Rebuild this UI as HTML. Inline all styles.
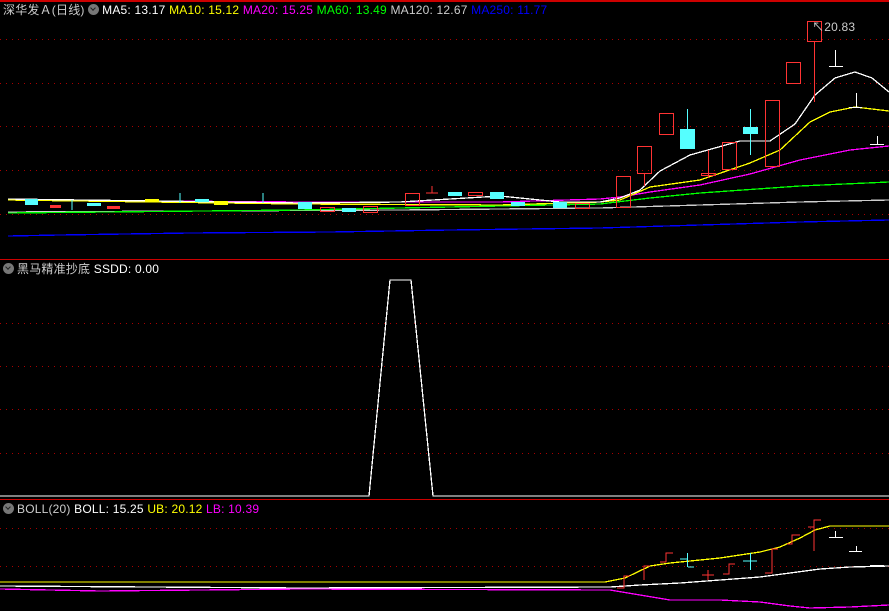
<!DOCTYPE html>
<html><head><meta charset="utf-8"><style>
html,body{margin:0;padding:0;background:#000;width:889px;height:611px;overflow:hidden}
.t{position:absolute;font-family:"Liberation Sans","Noto Sans CJK SC",sans-serif;font-size:12px;white-space:nowrap;line-height:14px;letter-spacing:0.2px}
.ic{display:inline-block;width:11px;height:11px;border-radius:50%;background:#777;vertical-align:-1px;position:relative;margin-right:3px}
.ic:after{content:"";position:absolute;left:3px;top:2px;width:3px;height:3px;border-right:1.5px solid #222;border-bottom:1.5px solid #222;transform:rotate(45deg)}
</style></head><body>
<svg width="889" height="611" style="position:absolute;left:0;top:0" shape-rendering="crispEdges">
<rect x="0" y="0" width="889" height="2" fill="#c00"/>
<g stroke="#a00" stroke-dasharray="1 5" stroke-width="1">
<line x1="0" y1="39.5" x2="889" y2="39.5"/><line x1="0" y1="83.5" x2="889" y2="83.5"/><line x1="0" y1="126.5" x2="889" y2="126.5"/><line x1="0" y1="170.5" x2="889" y2="170.5"/><line x1="0" y1="214.5" x2="889" y2="214.5"/>
<line x1="0" y1="323.5" x2="889" y2="323.5"/><line x1="0" y1="366.5" x2="889" y2="366.5"/><line x1="0" y1="409.5" x2="889" y2="409.5"/><line x1="0" y1="453.5" x2="889" y2="453.5"/>
<line x1="0" y1="528.5" x2="889" y2="528.5"/><line x1="0" y1="566.5" x2="889" y2="566.5"/>
</g>
<rect x="0" y="259" width="889" height="1" fill="#c00"/>
<rect x="0" y="499" width="889" height="1" fill="#c00"/>
<g fill="none" stroke-width="1.3">
<polyline stroke="#00f" points="8,236 60,235 190,233 330,232 450,230 600,228 700,225 800,222 889,220"/>
<polyline stroke="#ccc" points="8,212 200,211 400,210 600,208 700,205 800,202 889,200"/>
<polyline stroke="#0f0" points="8,213 300,210 500,206 600,204 650,198 700,193 800,186 889,182"/>
<polyline stroke="#f0f" points="8,200 300,202 500,202 600,199 620,197 650,192 700,185 750,174 800,160 850,150 889,146"/>
<polyline stroke="#ff0" points="8,200 300,204 500,205 600,202 620,200 650,187 700,180 750,163 780,150 810,122 830,112 855,107 889,111"/>
<polyline stroke="#fff" points="8,199 300,203 400,202 500,196 560,202 600,202 620,198 640,190 660,171 690,155 740,141 770,141 795,124 815,95 835,78 855,72 872,78 889,92"/>
</g>
<g>
<rect x="25" y="199" width="13" height="6" fill="#5ff"/>
<rect x="50" y="205" width="11" height="3" fill="#f33"/>
<line x1="72" y1="200" x2="72" y2="210" stroke="#5ff"/>
<rect x="87" y="203" width="14" height="3" fill="#5ff"/>
<rect x="107" y="206" width="13" height="3" fill="#f33"/>
<rect x="145" y="199" width="14" height="3" fill="#ff0"/>
<line x1="180" y1="193" x2="180" y2="203" stroke="#5ff"/>
<rect x="195" y="199" width="14" height="3" fill="#5ff"/>
<rect x="214" y="201" width="14" height="4" fill="#ff0"/>
<line x1="263" y1="193" x2="263" y2="203" stroke="#5ff"/>
<rect x="298" y="202" width="14" height="7" fill="#5ff"/>
<rect x="320.5" y="207.5" width="14" height="4" fill="none" stroke="#f33"/>
<rect x="342" y="208" width="14" height="4" fill="#5ff"/>
<rect x="363.5" y="206.5" width="14" height="6" fill="none" stroke="#f33"/>
<rect x="405.5" y="193.5" width="14" height="12" fill="none" stroke="#f33"/>
<line x1="432" y1="186" x2="432" y2="193" stroke="#f33"/><line x1="426" y1="193" x2="438" y2="193" stroke="#f33"/>
<rect x="448" y="192" width="14" height="4" fill="#5ff"/>
<rect x="468.5" y="192.5" width="14" height="3" fill="none" stroke="#f33"/>
<rect x="490" y="192" width="14" height="7" fill="#5ff"/>
<rect x="511" y="202" width="14" height="4" fill="#5ff"/>
<rect x="553" y="202" width="14" height="6" fill="#5ff"/>
<rect x="575.5" y="203.5" width="14" height="5" fill="none" stroke="#f33"/>
</g>
<g fill="none" stroke="#f33">
<rect x="616.5" y="176.5" width="14" height="31"/>
<rect x="637.5" y="146.5" width="14" height="27"/><line x1="644.5" y1="174" x2="644.5" y2="186"/>
<rect x="659.5" y="113.5" width="14" height="21"/>
<rect x="701.5" y="173.5" width="14" height="2"/><line x1="708.5" y1="150" x2="708.5" y2="178"/>
<rect x="722.5" y="142.5" width="14" height="27"/>
<rect x="765.5" y="100.5" width="14" height="66"/>
<rect x="786.5" y="62.5" width="14" height="21"/>
<rect x="807.5" y="21.5" width="14" height="20"/><line x1="814.5" y1="42" x2="814.5" y2="102"/>
</g>
<line x1="687.5" y1="109" x2="687.5" y2="129" stroke="#5ff"/><rect x="680" y="129" width="15" height="20" fill="#5ff"/>
<line x1="750.5" y1="109" x2="750.5" y2="155" stroke="#5ff"/><rect x="743" y="127" width="15" height="7" fill="#5ff"/>
<g stroke="#fff"><line x1="829" y1="66.5" x2="843" y2="66.5"/><line x1="835.5" y1="50" x2="835.5" y2="66"/>
<line x1="849" y1="107.5" x2="862" y2="107.5"/><line x1="856.5" y1="93" x2="856.5" y2="107"/>
<line x1="870" y1="144.5" x2="884" y2="144.5"/><line x1="877.5" y1="136" x2="877.5" y2="144"/></g>
<polyline fill="none" stroke="#fff" stroke-width="1.3" points="0,496 369,496 390,280 411,280 433,496 889,496"/>
<g fill="none" stroke-width="1.3">
<polyline stroke="#ff0" points="0,582 300,582 605,582 625,578 650,566 670,563 690,561 720,558 760,552 780,547 800,538 815,530 830,526 889,526"/>
<polyline stroke="#fff" points="0,586 300,588 610,587 640,585 680,583 720,580 760,577 790,573 820,569 850,567 889,566"/>
<polyline stroke="#f0f" points="0,589 100,591 300,589 610,590 640,595 670,600 720,600 760,602 790,606 810,608 850,607 889,605"/>
</g>
<g stroke="#f33" fill="none">
<polyline points="617,588 624,588 624,576 630,576"/>
<polyline points="644,580 644,566 650,566"/>
<polyline points="660,562 666,562 666,553 673,553"/>
<line x1="708" y1="570" x2="708" y2="580"/><line x1="702" y1="575" x2="714" y2="575"/>
<polyline points="723,574 729,574 729,564 735,564"/>
<polyline points="765,573 772,573 772,549 778,549"/>
<polyline points="787,544 792,544 792,535 800,535"/>
<polyline points="808,527 814,527 814,520 821,520"/><line x1="814" y1="527" x2="814" y2="551"/>
</g>
<g stroke="#5ff"><line x1="687.5" y1="553" x2="687.5" y2="567"/><line x1="680" y1="559" x2="687" y2="559"/><line x1="688" y1="567" x2="694" y2="567"/>
<line x1="750.5" y1="553" x2="750.5" y2="570"/><line x1="743" y1="561" x2="757" y2="561"/></g>
<g stroke="#fff"><line x1="829" y1="537.5" x2="843" y2="537.5"/><line x1="835.5" y1="531" x2="835.5" y2="537"/>
<line x1="849" y1="551.5" x2="862" y2="551.5"/><line x1="856.5" y1="546" x2="856.5" y2="551"/>
<line x1="870" y1="565.5" x2="884" y2="565.5"/></g>
</svg>
<div class="t" style="left:3px;top:3px;color:#ccc">深华发Ａ(日线) <span class="ic"></span><span style="color:#fff">MA5: 13.17</span> <span style="color:#ff0">MA10: 15.12</span> <span style="color:#f0f">MA20: 15.25</span> <span style="color:#0f0">MA60: 13.49</span> <span style="color:#ccc">MA120: 12.67</span> <span style="color:#00f">MA250: 11.77</span></div>
<div class="t" style="left:812px;top:20px;color:#ccc">↖20.83</div>
<div class="t" style="left:3px;top:262px;color:#ccc"><span class="ic"></span>黑马精准抄底 <span style="color:#fff">SSDD: 0.00</span></div>
<div class="t" style="left:3px;top:502px;color:#ccc"><span class="ic"></span>BOLL(20) <span style="color:#fff">BOLL: 15.25</span> <span style="color:#ff0">UB: 20.12</span> <span style="color:#f0f">LB: 10.39</span></div>
</body></html>
